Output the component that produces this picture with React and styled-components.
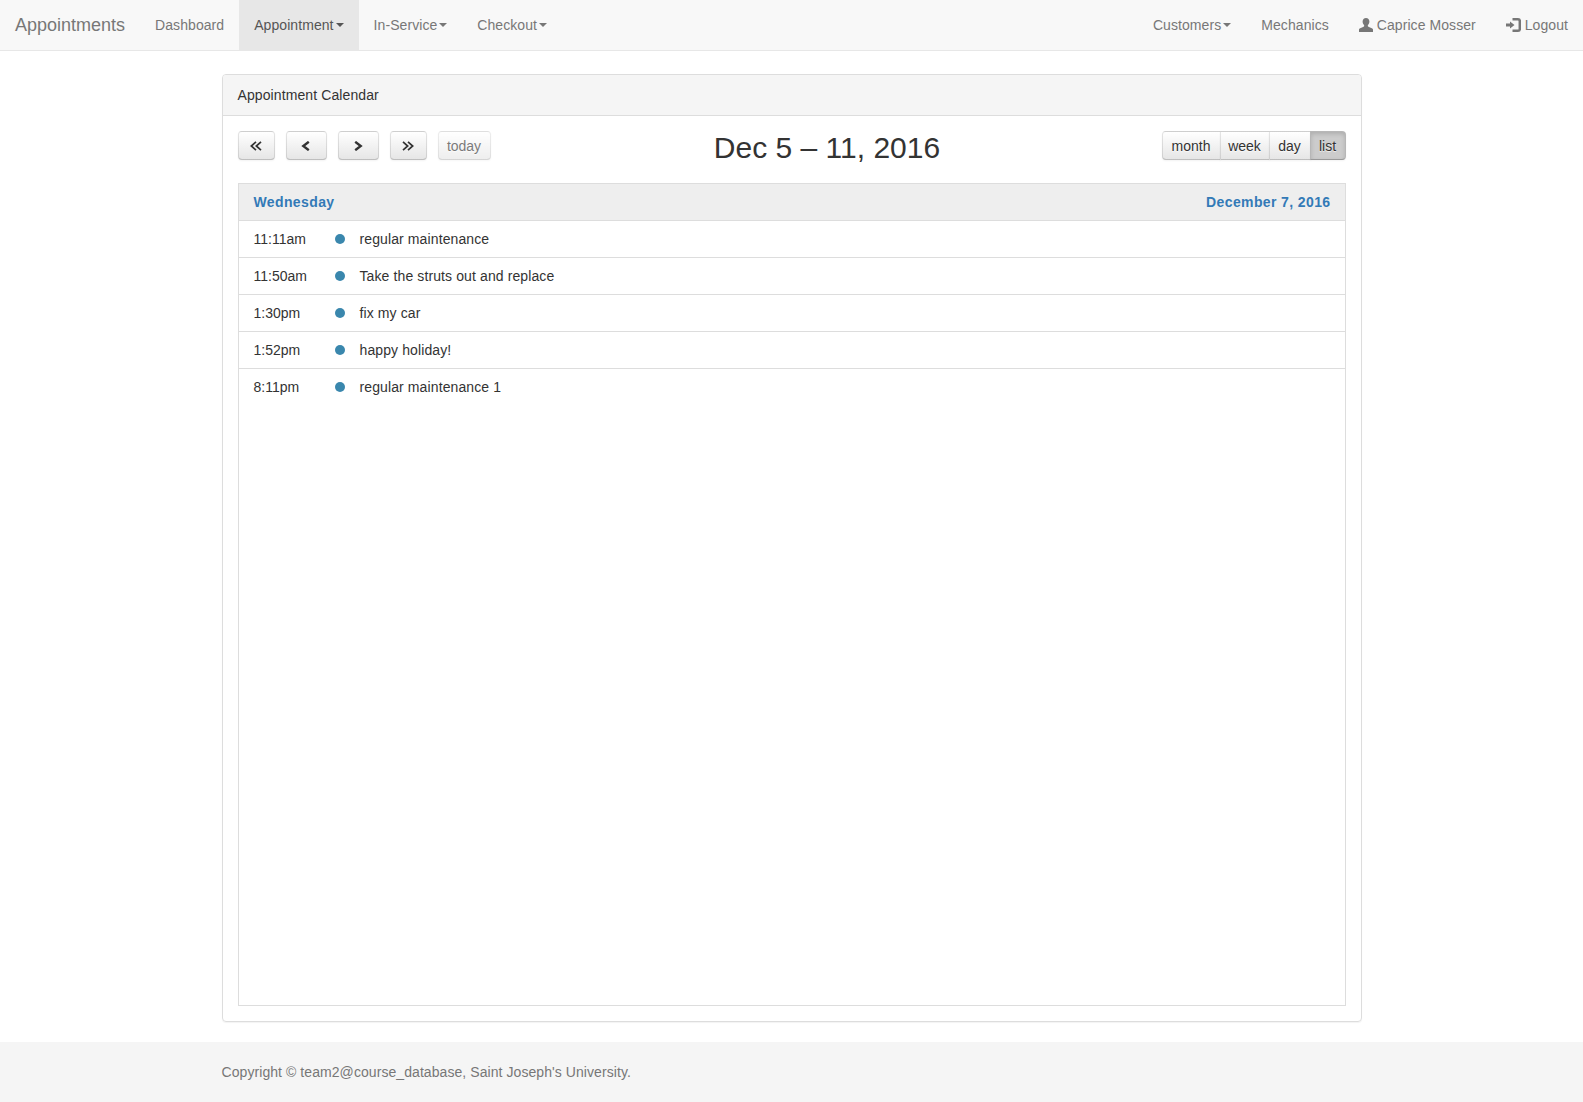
import styled, { createGlobalStyle } from 'styled-components'

const GlobalStyle = createGlobalStyle`
  html, body {
    margin: 0;
    padding: 0;
  }
  body {
    font-family: "Liberation Sans", Arial, sans-serif;
    font-size: 14px;
    line-height: 20px;
    color: #333;
    background: #fff;
  }
`

const leftLinks = [
  { name: 'Dashboard' },
  { name: 'Appointment', caret: true, active: true },
  { name: 'In-Service', caret: true },
  { name: 'Checkout', caret: true },
]

const navButtons = [
  { id: 'prevYear', width: 37, iconWidth: 12, weight: 1.7, d: 'M6 .8 1.300 5 6 9.200M11 .8 6.300 5 11 9.200' },
  { id: 'prev', width: 41, iconWidth: 10, weight: 2.4, d: 'M7.800 .8 2.300 5l5.500 4.200' },
  { id: 'next', width: 41, iconWidth: 10, weight: 2.4, d: 'M2.200 .8 7.700 5 2.200 9.200' },
  { id: 'nextYear', width: 37, iconWidth: 12, weight: 1.7, d: 'M1 .8 5.700 5 1 9.200M6 .8 10.700 5 6 9.200' },
]

const views = [
  { name: 'month', width: 59 },
  { name: 'week', width: 50 },
  { name: 'day', width: 42 },
  { name: 'list', width: 36, active: true },
]

const events = [
  { time: '11:11am', title: 'regular maintenance' },
  { time: '11:50am', title: 'Take the struts out and replace' },
  { time: '1:30pm', title: 'fix my car' },
  { time: '1:52pm', title: 'happy holiday!' },
  { time: '8:11pm', title: 'regular maintenance 1' },
]

function UserIcon() {
  return (
    <NavIcon viewBox="0 0 14 14" width="14" height="14">
      <path
        fill="currentColor"
        d="M7 0C4.900 0 3.600 1.500 3.600 3.600c0 1.400.6 2.700 1.400 3.400.3.400.3 1 .1 1.300-.2.400-.8.600-1.600.9C2 9.800 0 10.400 0 11.600V14h14v-2.400c0-1.200-2-1.800-3.500-2.400-.8-.3-1.400-.5-1.600-.9-.2-.3-.2-.9.1-1.300.8-.7 1.400-2 1.400-3.400C10.400 1.500 9.100 0 7 0z"
      />
    </NavIcon>
  )
}

function LoginIcon() {
  return (
    <NavIcon viewBox="0 0 15 14" width="15" height="14">
      <path fill="currentColor" d="M0 5.500h4V3.500L8.500 7 4 10.500V8.500H0z" />
      <path
        fill="none"
        stroke="currentColor"
        strokeWidth="2.500"
        d="M6.500 1.300h5.500c1 0 1.800.8 1.800 1.800v7.800c0 1-.8 1.800-1.800 1.800H6.500"
      />
    </NavIcon>
  )
}

export default function App() {
  return (
    <>
      <GlobalStyle />
      <Navbar>
        <NavGroup>
          <Brand>Appointments</Brand>
          {leftLinks.map((link) => (
            <NavLink key={link.name} $active={link.active}>
              {link.name}
              {link.caret && <Caret />}
            </NavLink>
          ))}
        </NavGroup>
        <NavGroup>
          <NavLink>
            Customers
            <Caret />
          </NavLink>
          <NavLink>Mechanics</NavLink>
          <NavLink>
            <UserIcon /> Caprice Mosser
          </NavLink>
          <NavLink>
            <LoginIcon /> Logout
          </NavLink>
        </NavGroup>
      </Navbar>

      <Container>
        <Panel>
          <PanelHeading>Appointment Calendar</PanelHeading>
          <PanelBody>
            <Toolbar>
              <ButtonRow>
                {navButtons.map((btn) => (
                  <FcButton key={btn.id} $width={btn.width}>
                    <ArrowIcon
                      viewBox={`0 0 ${btn.iconWidth} 10`}
                      width={btn.iconWidth}
                      height="10"
                      $weight={btn.weight}
                    >
                      <path d={btn.d} />
                    </ArrowIcon>
                  </FcButton>
                ))}
                <FcButton $width={53} $disabled>
                  today
                </FcButton>
              </ButtonRow>
              <Title>Dec 5 – 11, 2016</Title>
              <ViewGroup>
                {views.map((view) => (
                  <ViewButton
                    key={view.name}
                    $width={view.width}
                    $active={view.active}
                  >
                    {view.name}
                  </ViewButton>
                ))}
              </ViewGroup>
            </Toolbar>
            <ListView>
              <DayHeading>
                <span>Wednesday</span>
                <span>December 7, 2016</span>
              </DayHeading>
              {events.map((event) => (
                <EventRow key={event.time}>
                  <EventTime>{event.time}</EventTime>
                  <EventDot />
                  <EventTitle>{event.title}</EventTitle>
                </EventRow>
              ))}
            </ListView>
          </PanelBody>
        </Panel>
      </Container>

      <Footer>
        <FooterText>
          Copyright © team2@course_database, Saint Joseph's University.
        </FooterText>
      </Footer>
    </>
  )
}

const Navbar = styled.nav`
  display: flex;
  justify-content: space-between;
  height: 50px;
  background: #f8f8f8;
  border-bottom: 1px solid #e7e7e7;
`

const NavGroup = styled.div`
  display: flex;
`

const Brand = styled.a`
  padding: 15px;
  font-size: 18px;
  color: #777;
`

const NavLink = styled.a`
  display: flex;
  align-items: center;
  padding: 0 15px;
  white-space: pre;
  letter-spacing: 0.07px;
  color: ${(props) => (props.$active ? '#555' : '#777')};
  background: ${(props) => (props.$active ? '#e7e7e7' : 'transparent')};
`

const Caret = styled.span`
  display: inline-block;
  width: 0;
  height: 0;
  margin-left: 2px;
  border-top: 4px solid currentColor;
  border-left: 4px solid transparent;
  border-right: 4px solid transparent;
`

const NavIcon = styled.svg`
  display: block;
  flex: none;
`

const Container = styled.main`
  width: 1140px;
  margin: 23px auto 20px;
`

const Panel = styled.section`
  border: 1px solid #ddd;
  border-radius: 4px;
  box-shadow: 0 1px 1px rgba(0, 0, 0, 0.05);
`

const PanelHeading = styled.div`
  padding: 10px 15px;
  letter-spacing: 0.1px;
  background: #f5f5f5;
  border-bottom: 1px solid #ddd;
  border-radius: 3px 3px 0 0;
`

const PanelBody = styled.div`
  padding: 15px;
`

const Toolbar = styled.div`
  display: flex;
  align-items: flex-start;
  margin-bottom: 19px;
`

const ButtonRow = styled.div`
  display: flex;
  gap: 11px;
`

const FcButton = styled.button`
  box-sizing: border-box;
  width: ${(props) => props.$width}px;
  height: 29.4px;
  padding: 0;
  font: inherit;
  overflow: hidden;
  color: #333;
  text-shadow: 0 1px 1px rgba(255, 255, 255, 0.75);
  background: #f5f5f5 linear-gradient(#fff, #e6e6e6);
  border: 1px solid;
  border-color: rgba(0, 0, 0, 0.1) rgba(0, 0, 0, 0.1) rgba(0, 0, 0, 0.25);
  border-radius: 4px;
  box-shadow: inset 0 1px 0 rgba(255, 255, 255, 0.2),
    0 1px 2px rgba(0, 0, 0, 0.05);
  opacity: ${(props) => (props.$disabled ? 0.65 : 1)};
`

const ArrowIcon = styled.svg`
  display: block;
  margin: 1px auto 0;
  fill: none;
  stroke: #333;
  stroke-width: ${(props) => props.$weight};
`

const Title = styled.h2`
  flex: 1;
  margin: 0;
  padding-left: 2px;
  font-size: 30px;
  font-weight: 500;
  line-height: 33px;
  text-align: center;
`

const ViewGroup = styled.div`
  display: flex;
`

const ViewButton = styled(FcButton)`
  margin-left: -1px;
  border-radius: 0;
  background: ${(props) =>
    props.$active ? '#ccc' : '#f5f5f5 linear-gradient(#fff, #e6e6e6)'};
  box-shadow: ${(props) =>
    props.$active
      ? 'inset 0 2px 4px rgba(0, 0, 0, 0.15), 0 1px 2px rgba(0, 0, 0, 0.05)'
      : 'inset 0 1px 0 rgba(255, 255, 255, 0.2), 0 1px 2px rgba(0, 0, 0, 0.05)'};

  &:first-child {
    margin-left: 0;
    border-radius: 4px 0 0 4px;
  }
  &:last-child {
    border-radius: 0 4px 4px 0;
  }
`

const ListView = styled.div`
  box-sizing: border-box;
  height: 823px;
  border: 1px solid #ddd;
`

const DayHeading = styled.div`
  display: flex;
  justify-content: space-between;
  padding: 8px 14px 8px 15px;
  font-weight: bold;
  letter-spacing: 0.38px;
  color: #337ab7;
  background: #eee;
  border-bottom: 1px solid #ddd;
`

const EventRow = styled.div`
  display: flex;
  align-items: center;
  height: 37px;
  box-sizing: border-box;
  padding: 0 14px 0 15px;
  border-bottom: 1px solid #ddd;

  &:last-child {
    border-bottom-color: transparent;
  }
`

const EventTime = styled.span`
  width: 81px;
`

const EventDot = styled.span`
  width: 10px;
  height: 10px;
  margin-right: 15px;
  border-radius: 50%;
  background: #3a87ad;
`

const EventTitle = styled.span`
  letter-spacing: 0.11px;
`

const Footer = styled.footer`
  height: 60px;
  background: #f5f5f5;
`

const FooterText = styled.p`
  width: 1140px;
  margin: 0 auto;
  line-height: 60px;
  letter-spacing: 0.07px;
  color: #777;
`
